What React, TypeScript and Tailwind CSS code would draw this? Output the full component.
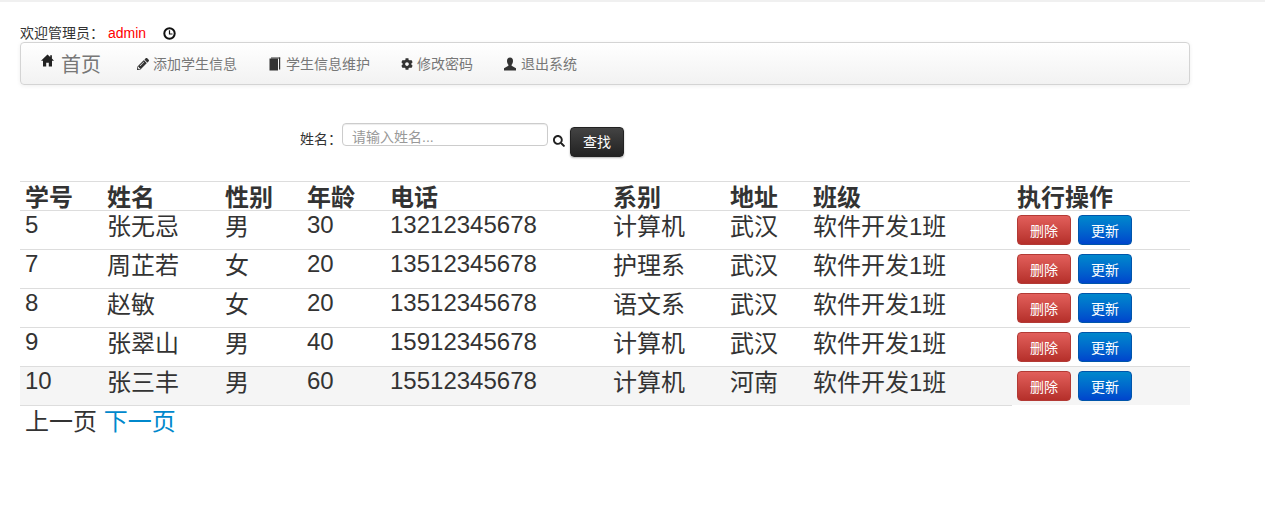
import React from "react";
import { FaPencilAlt, FaCog, FaSearch } from "react-icons/fa";

const rows = [
  ["5", "张无忌", "男", "30", "13212345678", "计算机", "武汉", "软件开发1班"],
  ["7", "周芷若", "女", "20", "13512345678", "护理系", "武汉", "软件开发1班"],
  ["8", "赵敏", "女", "20", "13512345678", "语文系", "武汉", "软件开发1班"],
  ["9", "张翠山", "男", "40", "15912345678", "计算机", "武汉", "软件开发1班"],
  ["10", "张三丰", "男", "60", "15512345678", "计算机", "河南", "软件开发1班"],
];
const heads = ["学号", "姓名", "性别", "年龄", "电话", "系别", "地址", "班级", "执行操作"];
const widths = ["w-[82px]", "w-[118px]", "w-[82px]", "w-[83px]", "w-[223px]", "w-[117px]", "w-[83px]", "w-[204px]", "w-[178px]"];
const numeric = [true, false, false, true, true, false, false, false];

const BookIcon = () => (
  <svg width="12" height="14" viewBox="0 0 12 14" className="text-[#333]">
    <path d="M0.5 1.5 H9 V13.5 H0.5 Z" fill="currentColor" />
    <path d="M10 0.5 H11.2 V12.5 H10 Z" fill="currentColor" />
    <path d="M2 0.5 H11.2 V1.5 H2 Z" fill="currentColor" />
  </svg>
);
const UserIcon = () => (
  <svg width="12" height="14" viewBox="0 0 12 14" className="text-[#333]">
    <path d="M6 0.5 C8 0.5 9 2 9 4 C9 5.8 8.2 7.2 7.6 7.8 V8.8 L12 11.2 V13.5 H0 V11.2 L4.4 8.8 V7.8 C3.8 7.2 3 5.8 3 4 C3 2 4 0.5 6 0.5 Z" fill="currentColor" />
  </svg>
);
const HomeIcon = () => (
  <svg width="13" height="13" viewBox="0 0 13 13" className="text-[#222]">
    <path d="M6.5 0.5 L9.2 3 V1.2 H10.9 V4.6 L13 6.8 H11 V12.5 H7.8 V8.8 H5.2 V12.5 H2 V6.8 H0 Z" fill="currentColor" />
  </svg>
);
const ClockIcon = () => (
  <svg width="13" height="13" viewBox="0 0 13 13" className="ml-[17px] text-[#111]">
    <circle cx="6.5" cy="6.5" r="5.2" fill="none" stroke="currentColor" strokeWidth="2" />
    <path d="M6.5 3.2 V7 H9.5" fill="none" stroke="currentColor" strokeWidth="1.2" />
  </svg>
);

const navs = [
  { icon: <FaPencilAlt className="text-[12px] text-[#333]" />, label: "添加学生信息", w: "w-[132px]", pad: "w-[16px]" },
  { icon: <BookIcon />, label: "学生信息维护", w: "w-[132px]", pad: "w-[17px]" },
  { icon: <FaCog className="text-[12px] text-[#333]" />, label: "修改密码", w: "w-[103px]", pad: "w-[16px]" },
  { icon: <UserIcon />, label: "退出系统", w: "w-[104px]", pad: "w-[17px]" },
];

export default function App() {
  return (
    <div className="min-h-[506px] bg-white text-[#333] font-['Liberation_Sans','Noto_Sans_CJK_SC',sans-serif]">
      <div className="h-[2px] bg-[#f0f0f0]" />
      <div className="w-[1170px] ml-5">
        <div className="mt-[22px] h-[18px] flex items-center text-[14px] leading-[19px] text-[#333]">
          <span>欢迎管理员：</span>
          <span className="ml-[4px] text-[#ff0000]">admin</span>
          <ClockIcon />
        </div>
        <div className="h-[43px] flex items-center rounded-[4px] border border-[#d4d4d4] bg-gradient-to-b from-white to-[#f2f2f2] shadow-[0_1px_4px_rgba(0,0,0,0.065)] pl-5 text-[#777]">
          <div className="w-[96px] flex items-center">
            <span className="flex -mt-[6px]"><HomeIcon /></span>
            <span className="ml-[7px] mt-[2px] text-[20px] leading-[24px] text-[#777]">首页</span>
          </div>
          {navs.map((n) => (
            <div key={n.label} className={`${n.w} flex items-center text-[14px]`}>
              <span className={`${n.pad} flex`}>{n.icon}</span>
              <span className="mt-[2px]">{n.label}</span>
            </div>
          ))}
        </div>
        <div className="mt-[38px] h-[39px] ml-[280px] flex items-start">
          <span className="mt-[7px] text-[14px] leading-[19px]">姓名：</span>
          <input
            placeholder="请输入姓名..."
            className="w-[206px] h-[23px] rounded-[4px] border border-[#ccc] px-[9px] pt-[4px] text-[14px] text-[#555] placeholder:text-[#999] shadow-[inset_0_1px_1px_rgba(0,0,0,0.075)] outline-none"
          />
          <FaSearch className="ml-[5px] mt-[12px] text-[12px] text-[#222]" />
          <button className="ml-[5px] mt-[4px] w-[54px] h-[30px] rounded-[4px] border border-[#222] bg-gradient-to-b from-[#444] to-[#222] text-[14px] text-white shadow-[0_1px_2px_rgba(0,0,0,0.3)]">
            查找
          </button>
        </div>
        <div className="mt-[19px]">
          <div className="flex h-[29px] border-t border-[#ddd] text-[24px] font-bold leading-[32px] text-[#333]">
            {heads.map((h, i) => (
              <div key={h} className={`${widths[i]} pl-[5px] whitespace-nowrap`}>{h}</div>
            ))}
          </div>
          {rows.map((r, ri) => (
            <div key={r[0]} className={`flex h-[39px] border-t border-[#ddd] text-[24px] leading-[29px] ${ri === 4 ? "bg-[#f5f5f5]" : ""}`}>
              {r.map((c, i) => (
                <div key={i} className={`${widths[i]} pl-[5px] whitespace-nowrap ${numeric[i] ? "-mt-[1px]" : "mt-[1px]"}`}>{c}</div>
              ))}
              <div className="w-[178px] pl-[5px] pt-1 flex items-start gap-[7px]">
                <button className="w-[54px] h-[30px] pt-[1px] rounded-[4px] border border-[#b33a35] bg-gradient-to-b from-[#e25f5b] to-[#b52f2a] text-[14px] text-white">删除</button>
                <button className="w-[54px] h-[30px] pt-[1px] rounded-[4px] border border-[#0055aa] bg-gradient-to-b from-[#0088cc] to-[#0044cc] text-[14px] text-white">更新</button>
              </div>
            </div>
          ))}
          <div className="w-[992px] border-t border-[#ddd] pl-[5px] text-[24px] leading-[31px] whitespace-nowrap">
            <span>上一页</span> <span className="text-[#0088cc]">下一页</span>
          </div>
        </div>
      </div>
    </div>
  );
}
